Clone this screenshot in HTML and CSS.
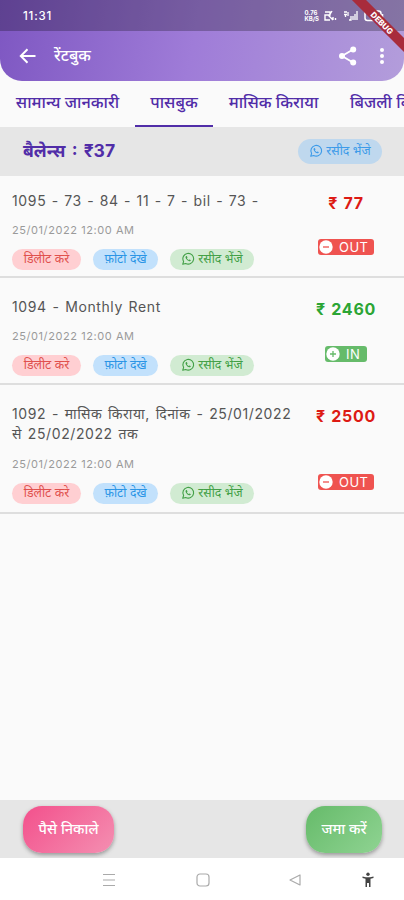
FILE: index.html
```html
<!DOCTYPE html>
<html lang="hi">
<head>
    <meta charset="UTF-8">
    <meta name="viewport" content="width=device-width, initial-scale=1.0">
    <title>रेंटबुक</title>
    <link rel="stylesheet" href="styles.css">
</head>
<body>
    <svg class="symbols">
        <symbol id="whatsapp" viewBox="0 0 24 24">
            <path d="M3 21l1.5-4.8A9.2 9.2 0 1 1 8 19.6z" fill="none" stroke="currentColor" stroke-width="1.9" stroke-linejoin="round"/>
            <path d="M8.6 7.2c-1.5 1-1 3.600 1.700 6.300s5.300 3.200 6.300 1.700c.4-.7.200-1.200-.300-1.500l-1.500-.8c-.6-.3-1 .8-1.500.9-.9-.1-3-2.200-3.100-3.100.1-.5 1.200-.9.900-1.500l-.8-1.500c-.3-.6-1-.9-1.700-.5z" fill="currentColor"/>
        </symbol>
        <symbol id="minus" viewBox="0 0 14 14">
            <circle cx="7" cy="7" r="6.700" fill="#fff"/>
            <path d="M4 7h6" stroke="#ef5350" stroke-width="1.300"/>
        </symbol>
        <symbol id="plus" viewBox="0 0 14 14">
            <circle cx="7" cy="7" r="6.700" fill="#fff"/>
            <path d="M4 7h6M7 4v6" stroke="#66bb6a" stroke-width="1.300"/>
        </symbol>
    </svg>
    <div class="screen">
        <header class="header">
            <div class="status-bar">
                <span class="clock">11:31</span>
                <div class="status-icons">
                    <span class="net">0.76<br>KB/S</span>
                    <svg width="14" height="12" viewBox="0 0 14 12"><path d="M1 2h5v3H1v5h5M8 1l-3 5 4 4M9 10V7M11.500 10V8" fill="none" stroke="#fff" stroke-width="1.400"/></svg>
                    <svg width="16" height="12" viewBox="0 0 16 12"><path d="M1 2h3M1 4.500h3M2.500 4.500V7M5 2v4M6 10h2V6M10 10V6M12 10V4M14 10V1" fill="none" stroke="#fff" stroke-width="1.300"/></svg>
                    <svg width="20" height="12" viewBox="0 0 20 12"><rect x="1" y="1" width="16" height="9.500" rx="2.500" fill="none" stroke="#fff" stroke-width="1.500"/><path d="M18.500 4v4" stroke="#fff" stroke-width="1.500"/><rect x="6" y="3" width="7" height="5.500" rx="1" fill="#fff"/></svg>
                </div>
            </div>
            <div class="app-bar">
                <svg class="back" width="18" height="16" viewBox="0 0 18 16"><path d="M16.500 8H2M8.500 1.200L1.800 8l6.700 6.800" fill="none" stroke="#fff" stroke-width="2"/></svg>
                <h1 class="title">रेंटबुक</h1>
                <svg class="share" width="20" height="20" viewBox="0 0 20 20"><path d="M15 3.500L4 10l11 6.500" fill="none" stroke="#fff" stroke-width="1.800"/><circle cx="15.200" cy="3.400" r="3" fill="#fff"/><circle cx="4" cy="10" r="3" fill="#fff"/><circle cx="15.200" cy="16.600" r="3" fill="#fff"/></svg>
                <svg width="6" height="18" viewBox="0 0 6 18"><circle cx="3" cy="3" r="2" fill="#fff"/><circle cx="3" cy="9" r="2" fill="#fff"/><circle cx="3" cy="15" r="2" fill="#fff"/></svg>
            </div>
        </header>
        <div class="debug-banner">DEBUG</div>

        <nav class="tabs">
            <span class="tab tab-info">सामान्य जानकारी</span>
            <span class="tab tab-passbook active">पासबुक</span>
            <span class="tab tab-rent">मासिक किराया</span>
            <span class="tab tab-bill">बिजली बिल</span>
        </nav>

        <div class="balance">
            <span class="balance-text">बैलेन्स : ₹37</span>
            <span class="chip chip-share"><svg class="wa"><use href="#whatsapp"/></svg>रसीद भेंजे</span>
        </div>

        <main class="list">
            <div class="entry">
                <div class="entry-info">
                    <p class="entry-title">1095 - 73 - 84 - 11 - 7 - bil - 73 -</p>
                    <p class="entry-date">25/01/2022 12:00 AM</p>
                    <div class="chips">
                        <span class="chip red">डिलीट करे</span>
                        <span class="chip blue">फ़ोटो देखे</span>
                        <span class="chip green"><svg class="wa"><use href="#whatsapp"/></svg>रसीद भेंजे</span>
                    </div>
                </div>
                <div class="entry-amount">
                    <span class="amount out">₹ 77</span>
                    <span class="tag tag-out"><svg class="sign"><use href="#minus"/></svg>OUT</span>
                </div>
            </div>
            <div class="entry">
                <div class="entry-info">
                    <p class="entry-title">1094 - Monthly Rent</p>
                    <p class="entry-date">25/01/2022 12:00 AM</p>
                    <div class="chips">
                        <span class="chip red">डिलीट करे</span>
                        <span class="chip blue">फ़ोटो देखे</span>
                        <span class="chip green"><svg class="wa"><use href="#whatsapp"/></svg>रसीद भेंजे</span>
                    </div>
                </div>
                <div class="entry-amount">
                    <span class="amount in">₹ 2460</span>
                    <span class="tag tag-in"><svg class="sign"><use href="#plus"/></svg>IN</span>
                </div>
            </div>
            <div class="entry tall">
                <div class="entry-info">
                    <p class="entry-title">1092 - मासिक किराया, दिनांक - 25/01/2022<br>से 25/02/2022 तक</p>
                    <p class="entry-date">25/01/2022 12:00 AM</p>
                    <div class="chips">
                        <span class="chip red">डिलीट करे</span>
                        <span class="chip blue">फ़ोटो देखे</span>
                        <span class="chip green"><svg class="wa"><use href="#whatsapp"/></svg>रसीद भेंजे</span>
                    </div>
                </div>
                <div class="entry-amount">
                    <span class="amount out">₹ 2500</span>
                    <span class="tag tag-out"><svg class="sign"><use href="#minus"/></svg>OUT</span>
                </div>
            </div>
        </main>

        <footer class="actions">
            <button class="btn withdraw">पैसे निकाले</button>
            <button class="btn deposit">जमा करें</button>
        </footer>
        <div class="nav-bar">
            <svg width="14" height="14" viewBox="0 0 14 14"><path d="M1 1.500h12M1 7h12M1 12.500h12" stroke="#aaa" stroke-width="1.200"/></svg>
            <svg class="home" width="14" height="14" viewBox="0 0 14 14"><rect x="1" y="1" width="12" height="12" rx="3" fill="none" stroke="#aaa" stroke-width="1.200"/></svg>
            <svg class="prev" width="14" height="14" viewBox="0 0 14 14"><path d="M12 2v10L2 7z" fill="none" stroke="#aaa" stroke-width="1.200" stroke-linejoin="round"/></svg>
            <svg width="14" height="16" viewBox="0 0 14 16"><circle cx="7" cy="2.200" r="1.700" fill="#444"/><path d="M1.500 4.500l3.500.8h4l3.500-.8v1.500l-3 .8V15H8v-4H6v4H4.500V6.800l-3-.8z" fill="#444"/></svg>
        </div>
    </div>
</body>
</html>
```
FILE: styles.css
```css
* {
    box-sizing: border-box;
}
body {
    margin: 0;
    font-family: Inter, "Noto Sans", "Noto Sans Devanagari", sans-serif;
    background-color: #fafafa;
}
.symbols {
    display: none;
}
.screen {
    position: relative;
    width: 404px;
    height: 900px;
    overflow: hidden;
    display: flex;
    flex-direction: column;
}
svg {
    flex-shrink: 0;
}
.header {
    height: 81px;
    overflow: hidden;
    border-radius: 0 0 22px 22px;
    background: linear-gradient(100deg, #7e57c2 0%, #9f7cd8 48%, #b39ddb 100%);
    color: white;
}
.status-bar {
    height: 31px;
    padding: 0 20px 0 23px;
    display: flex;
    align-items: center;
    justify-content: space-between;
    background: rgba(0, 0, 0, 0.25);
}
.clock {
    font-size: 11.5px;
    font-weight: 500;
    letter-spacing: 0.8px;
}
.status-icons {
    display: flex;
    align-items: center;
    gap: 5px;
}
.net {
    font-size: 6px;
    font-weight: 700;
    line-height: 6px;
}
.app-bar {
    height: 50px;
    padding: 0 19px;
    display: flex;
    align-items: center;
}
.title {
    flex: 1;
    margin: 0 0 2px 17px;
    font-size: 16px;
    font-weight: 500;
}
.share {
    margin-right: 21px;
}
.debug-banner {
    position: absolute;
    top: 18px;
    left: 332px;
    width: 100px;
    height: 10px;
    transform: rotate(45deg);
    background: #a82c3c;
    color: white;
    font-size: 8px;
    font-weight: 800;
    line-height: 10px;
    text-align: center;
}
.tabs {
    height: 46px;
    display: flex;
    overflow: hidden;
    color: #512da8;
    font-size: 16.3px;
    font-weight: 500;
    white-space: nowrap;
}
.tab {
    flex-shrink: 0;
    display: flex;
    align-items: center;
    justify-content: center;
    padding-bottom: 2px;
    border-bottom: 2px solid transparent;
}
.tab-info {
    width: 135px;
}
.tab-passbook {
    width: 78px;
}
.tab-rent {
    width: 121px;
}
.tab-bill {
    width: 100px;
    justify-content: flex-start;
    padding-left: 16px;
}
.active {
    border-bottom-color: #512da8;
}
.balance {
    height: 49px;
    padding: 0 22px 0 23px;
    display: flex;
    align-items: center;
    justify-content: space-between;
    background: #e6e6e6;
}
.balance-text {
    padding-bottom: 4px;
    color: #512da8;
    font-size: 17.5px;
    font-weight: 700;
    word-spacing: 2px;
}
.chip {
    height: 21px;
    border-radius: 11px;
    display: flex;
    align-items: center;
    justify-content: center;
    gap: 3px;
    font-size: 12.3px;
    line-height: 19px;
    padding-bottom: 2px;
    white-space: nowrap;
}
.chip-share {
    width: 84px;
    height: 25px;
    border-radius: 13px;
    background: #bfd8ee;
    color: #3d9be9;
}
.wa {
    width: 14px;
    height: 14px;
    margin-top: 1px;
}
.red {
    width: 69px;
    background: #ffcfd2;
    color: #e0504d;
}
.blue {
    width: 65px;
    background: #c2e1fc;
    color: #2b95e6;
}
.green {
    width: 84px;
    background: #d1ebd2;
    color: #43a047;
}
.list {
    flex: 1;
}
.entry {
    height: 107px;
    padding: 19px 0 0 12px;
    display: flex;
    border-bottom: 2px solid #dedede;
}
.entry:first-child {
    height: 102px;
    padding-top: 15px;
}
.tall {
    height: 129px;
}
.entry-info {
    width: 288px;
}
.entry-title {
    margin: 0;
    color: #555;
    font-size: 14px;
    line-height: 20px;
    letter-spacing: 0.6px;
    word-spacing: 1.2px;
    white-space: nowrap;
}
.entry:first-child .entry-title {
    letter-spacing: 0.65px;
    word-spacing: 0.8px;
}
.entry-date {
    margin: 11px 0 0;
    color: #9a9a9a;
    font-size: 11px;
    line-height: 16px;
    letter-spacing: 0.57px;
}
.tall .entry-date {
    margin-top: 12px;
}
.chips {
    display: flex;
    gap: 12px;
    margin-top: 11px;
}
.entry-amount {
    flex: 1;
    padding: 2px 12px 21px 0;
    display: flex;
    flex-direction: column;
    align-items: center;
    justify-content: space-between;
}
.tall .entry-amount {
    padding-bottom: 22px;
}
.amount {
    font-size: 16px;
    font-weight: 700;
    line-height: 20px;
    letter-spacing: 0.7px;
    word-spacing: 1px;
}
.out {
    color: #dd1a14;
}
.in {
    color: #2ba534;
}
.tag {
    height: 16px;
    padding-left: 1px;
    display: flex;
    align-items: center;
    gap: 6px;
    border-radius: 3px;
    color: white;
    font-size: 13px;
    letter-spacing: 0.5px;
}
.sign {
    width: 14px;
    height: 14px;
}
.tag-out {
    width: 56px;
    background: #ef5350;
}
.tag-in {
    width: 42px;
    background: #66bb6a;
}
.actions {
    height: 58px;
    padding: 6px 22px 0 23px;
    display: flex;
    justify-content: space-between;
    background: #e6e6e6;
}
.btn {
    height: 47px;
    padding: 0 0 4px;
    border: none;
    border-radius: 19px;
    color: white;
    font-family: inherit;
    font-size: 14.5px;
    font-weight: 500;
    box-shadow: 0 2px 4px rgba(0, 0, 0, 0.35);
}
.withdraw {
    width: 91px;
    background: linear-gradient(135deg, #f3508c, #f48fb1);
}
.deposit {
    width: 76px;
    background: linear-gradient(135deg, #66bb6a, #8fd392);
}
.nav-bar {
    height: 42px;
    padding: 1px 29px 0 102px;
    display: flex;
    align-items: center;
    background: white;
}
.home {
    margin-left: 80px;
}
.prev {
    margin: 0 59px 0 78px;
}
```
